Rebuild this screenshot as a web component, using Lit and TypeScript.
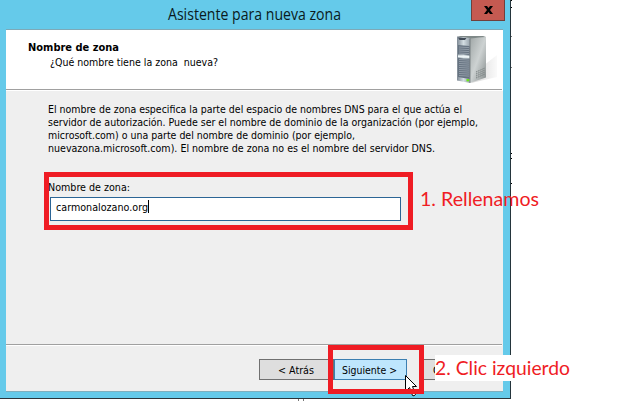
import { LitElement, html, css, svg } from "lit";
import { customElement, property } from "lit/decorators.js";

/** One line of text, set to a fixed measure. */
@customElement("text-line")
class TextLine extends LitElement {
  @property() text = "";
  @property({ type: Number }) measure = 100;
  static styles = css`
    :host { display: block; }
    svg { display: block; overflow: visible; width: 100%; height: 1em; }
    text { fill: currentColor; white-space: pre; }
  `;
  render() {
    return html`<svg><text x="0" y="0.9em" textLength=${this.measure} lengthAdjust="spacingAndGlyphs">${this.text}</text></svg>`;
  }
}

@customElement("server-icon")
class ServerIcon extends LitElement {
  static styles = css`:host { display: block; } svg { display: block; }`;
  render() {
    const vents = [47, 49, 51, 53, 59.5, 61.5, 63.5, 65.5, 67.5, 69.5, 71.5, 73.5, 75.5];
    return html`<svg width="44" height="50" viewBox="456 35 44 50">
      <defs>
        <linearGradient id="side" x1="0" y1="0" x2="1" y2="1"><stop offset="0" stop-color="#9fa6a6"/><stop offset=".5" stop-color="#cdd2d2"/><stop offset="1" stop-color="#858c8c"/></linearGradient>
        <linearGradient id="front" x1="0" y1="0" x2="1" y2="0"><stop offset="0" stop-color="#7e8994"/><stop offset=".5" stop-color="#d3dde2"/><stop offset="1" stop-color="#98a3ac"/></linearGradient>
        <linearGradient id="shade" x1="0" y1="0" x2="1" y2="0"><stop offset="0" stop-color="#d4d4d4"/><stop offset="1" stop-color="#fafafa"/></linearGradient>
      </defs>
      <path d="M484 66 L498 55 V77 L472 83Z" fill="url(#shade)"/>
      <path d="M470.5 38 L487 37 V77.5 L470.5 83Z" fill="url(#side)"/>
      <path d="M458 36.5 L461 36 H484 L487 37 L471 38.5Z" fill="#7f8988"/>
      <path d="M458 36.5 L471 38 V83 L458 80.5Z" fill="url(#front)"/>
      <path d="M459 37.5 L467.5 38 L466 40 H460.5Z" fill="#414b57"/>
      <path d="M459 45 L470.5 46 V55 L459 54Z M459 58 L470.5 59 V79 L459 77Z" fill="#667381"/>
      ${vents.map((y) => svg`<path d=${`M460 ${y} L470 ${y + 0.6}`} stroke="#a3aeb8" stroke-width=".7"/>`)}
      <path d="M459 56.3 L470.5 57" stroke="#edf5f7" stroke-width="2"/>
      ${[0, 2, 4, 6].map((d) => svg`<path d=${`M477 ${72 + d} L486 ${68 + d}`} stroke="#747c7c" stroke-width=".9" stroke-dasharray="1.5 .8"/>`)}
      <rect x="467.5" y="79" width="2.7" height="2.3" fill="#69e817"/>
      <path d="M471 38.5V83" stroke="#5e696c" stroke-width=".7"/>
    </svg>`;
  }
}

@customElement("app-root")
class AppRoot extends LitElement {
  static styles = css`
    :host { display: block; position: relative; width: 644px; height: 401px; overflow: hidden; background: #fff; color: #000;
      font-family: "DejaVu Sans Condensed", "DejaVu Sans", sans-serif; font-size: 11px; }
    * { box-sizing: border-box; }
    .window { width: 511px; height: 399px; background: #65caea; border-right: 1px solid #24353c; border-bottom: 1px solid #2c343a; padding: 0 7px 6px 6px; }
    .title { height: 29px; display: flex; align-items: flex-start; justify-content: flex-end; }
    .title text-line { flex: 1; padding: 6px 0 0 162px; font: 15.5px "Open Sans", sans-serif; color: #0a1a20; }
    .close { width: 34px; height: 21px; margin-right: -2px; border: 1px solid #70403c; border-top: 0; background: #c55a51; display: flex; align-items: center; justify-content: center; }
    .content { height: 363px; border-top: 1px solid #7ea9b7; border-bottom: 1px solid #7fafbe; background: #efefef; display: flex; flex-direction: column; }
    .header { height: 61px; background: #fff; border-bottom: 1px solid #fff; display: flex; flex: none; }
    .header-inner { flex: 1; margin-right: 1px; border-bottom: 1px solid #a0a0a0; display: flex; justify-content: space-between; padding: 5px 3px 0 22px; }
    .heads { padding-top: 6px; }
    .heads .h { font-weight: bold; }
    .heads .s { padding: 4px 0 0 22px; }
    .body { flex: 1; padding: 12px 0 0 42px; }
    .para { display: grid; grid-auto-rows: 13px; }
    .label { margin-top: 26px; }
    .field { width: 351px; height: 24px; margin: 5px 0 0 2px; background: #fff; border: 1px solid #2b6595; display: flex; padding: 2px 0 0 5px; }
    .field text-line { width: 92px; padding-top: 1px; }
    .caret { width: 1px; height: 13px; background: #000; }
    .footer { height: 47px; border-top: 1px solid #a0a0a0; box-shadow: inset 0 1px #fff; display: flex; padding: 14px 0 0 253px; margin-right: 1px; flex: none; }
    .btn { width: 75px; height: 21px; background: #dedede; border: 1px solid #707070; padding: 4px 0 0 18px; }
    .btn.on { width: 73px; background: #bee6fd; border-color: #3c7fb1; padding-left: 7px; }
    .btn.cancel { margin-left: 13px; padding-left: 12px; }
    .mark { position: absolute; border: 5px solid #ef1c24; }
    .m1 { left: 44px; top: 172px; width: 369px; height: 58px; }
    .m2 { left: 328px; top: 345px; width: 96px; height: 49px; }
    .note { position: absolute; color: #ef1c24; font: 19px Lato, sans-serif; }
    .n1 { left: 420px; top: 189px; }
    .n2 { left: 435px; top: 355px; width: 137px; height: 26px; padding: 3px 0 0 0; background: #fff; }
    .cursor, .specks { position: absolute; left: 405px; top: 375px; }
    .specks { left: 0; top: 0; }
  `;
  render() {
    const line = (text: string, w: number, cls = "") => html`<text-line class=${cls} .text=${text} .measure=${w}></text-line>`;
    return html`
      <div class="window">
        <div class="title">
          ${line("Asistente para nueva zona", 173)}
          <div class="close"><svg width="9" height="8" viewBox="0 0 9 8"><path d="M0 0h3l1.5 2L6 0h3L6 4l3 4H6L4.500 6 3 8H0l3-4z"/></svg></div>
        </div>
        <div class="content">
          <div class="header"><div class="header-inner">
            <div class="heads">${line("Nombre de zona", 91, "h")}${line("¿Qué nombre tiene la zona  nueva?", 168, "s")}</div>
            <server-icon></server-icon>
          </div></div>
          <div class="body">
            <div class="para">
              ${line("El nombre de zona especifica la parte del espacio de nombres DNS para el que actúa el", 414)}
              ${line("servidor de autorización. Puede ser el nombre de dominio de la organización (por ejemplo,", 430)}
              ${line("microsoft.com) o una parte del nombre de dominio (por ejemplo,", 307)}
              ${line("nuevazona.microsoft.com). El nombre de zona no es el nombre del servidor DNS.", 387)}
            </div>
            ${line("Nombre de zona:", 82, "label")}
            <div class="field">${line("carmonalozano.org", 92)}<span class="caret"></span></div>
          </div>
          <div class="footer">
            <div class="btn">${line("< Atrás", 36)}</div>
            <div class="btn on">${line("Siguiente >", 55)}</div>
            <div class="btn cancel">${line("C", 7)}</div>
          </div>
        </div>
      </div>
      <svg class="specks" width="644" height="401" shape-rendering="crispEdges">
        <path d="M511 0h1v1h-1zM511 7h1v1h-1zM511 153h1v1h-1zM511 158h1v1h-1zM511 183h1v1h-1z"/>
        <path d="M511 36h1v1h-1zM511 67h1v1h-1zM298 399h1v2h-1zM303 399h1v2h-1z" fill="#777"/>
      </svg>
      <svg class="cursor" width="13" height="22" viewBox="0 0 13 22"><path d="M.5 .5V16.500L4.500 12.500 7.500 20.500Q9 21.500 10.500 19.500L7.500 11.500H11.500Z" fill="#fff" stroke="#000"/></svg>
      <div class="mark m1"></div>
      <div class="mark m2"></div>
      <div class="note n1">${line("1. Rellenamos", 119)}</div>
      <div class="note n2">${line("2. Clic izquierdo", 135)}</div>
    `;
  }
}
